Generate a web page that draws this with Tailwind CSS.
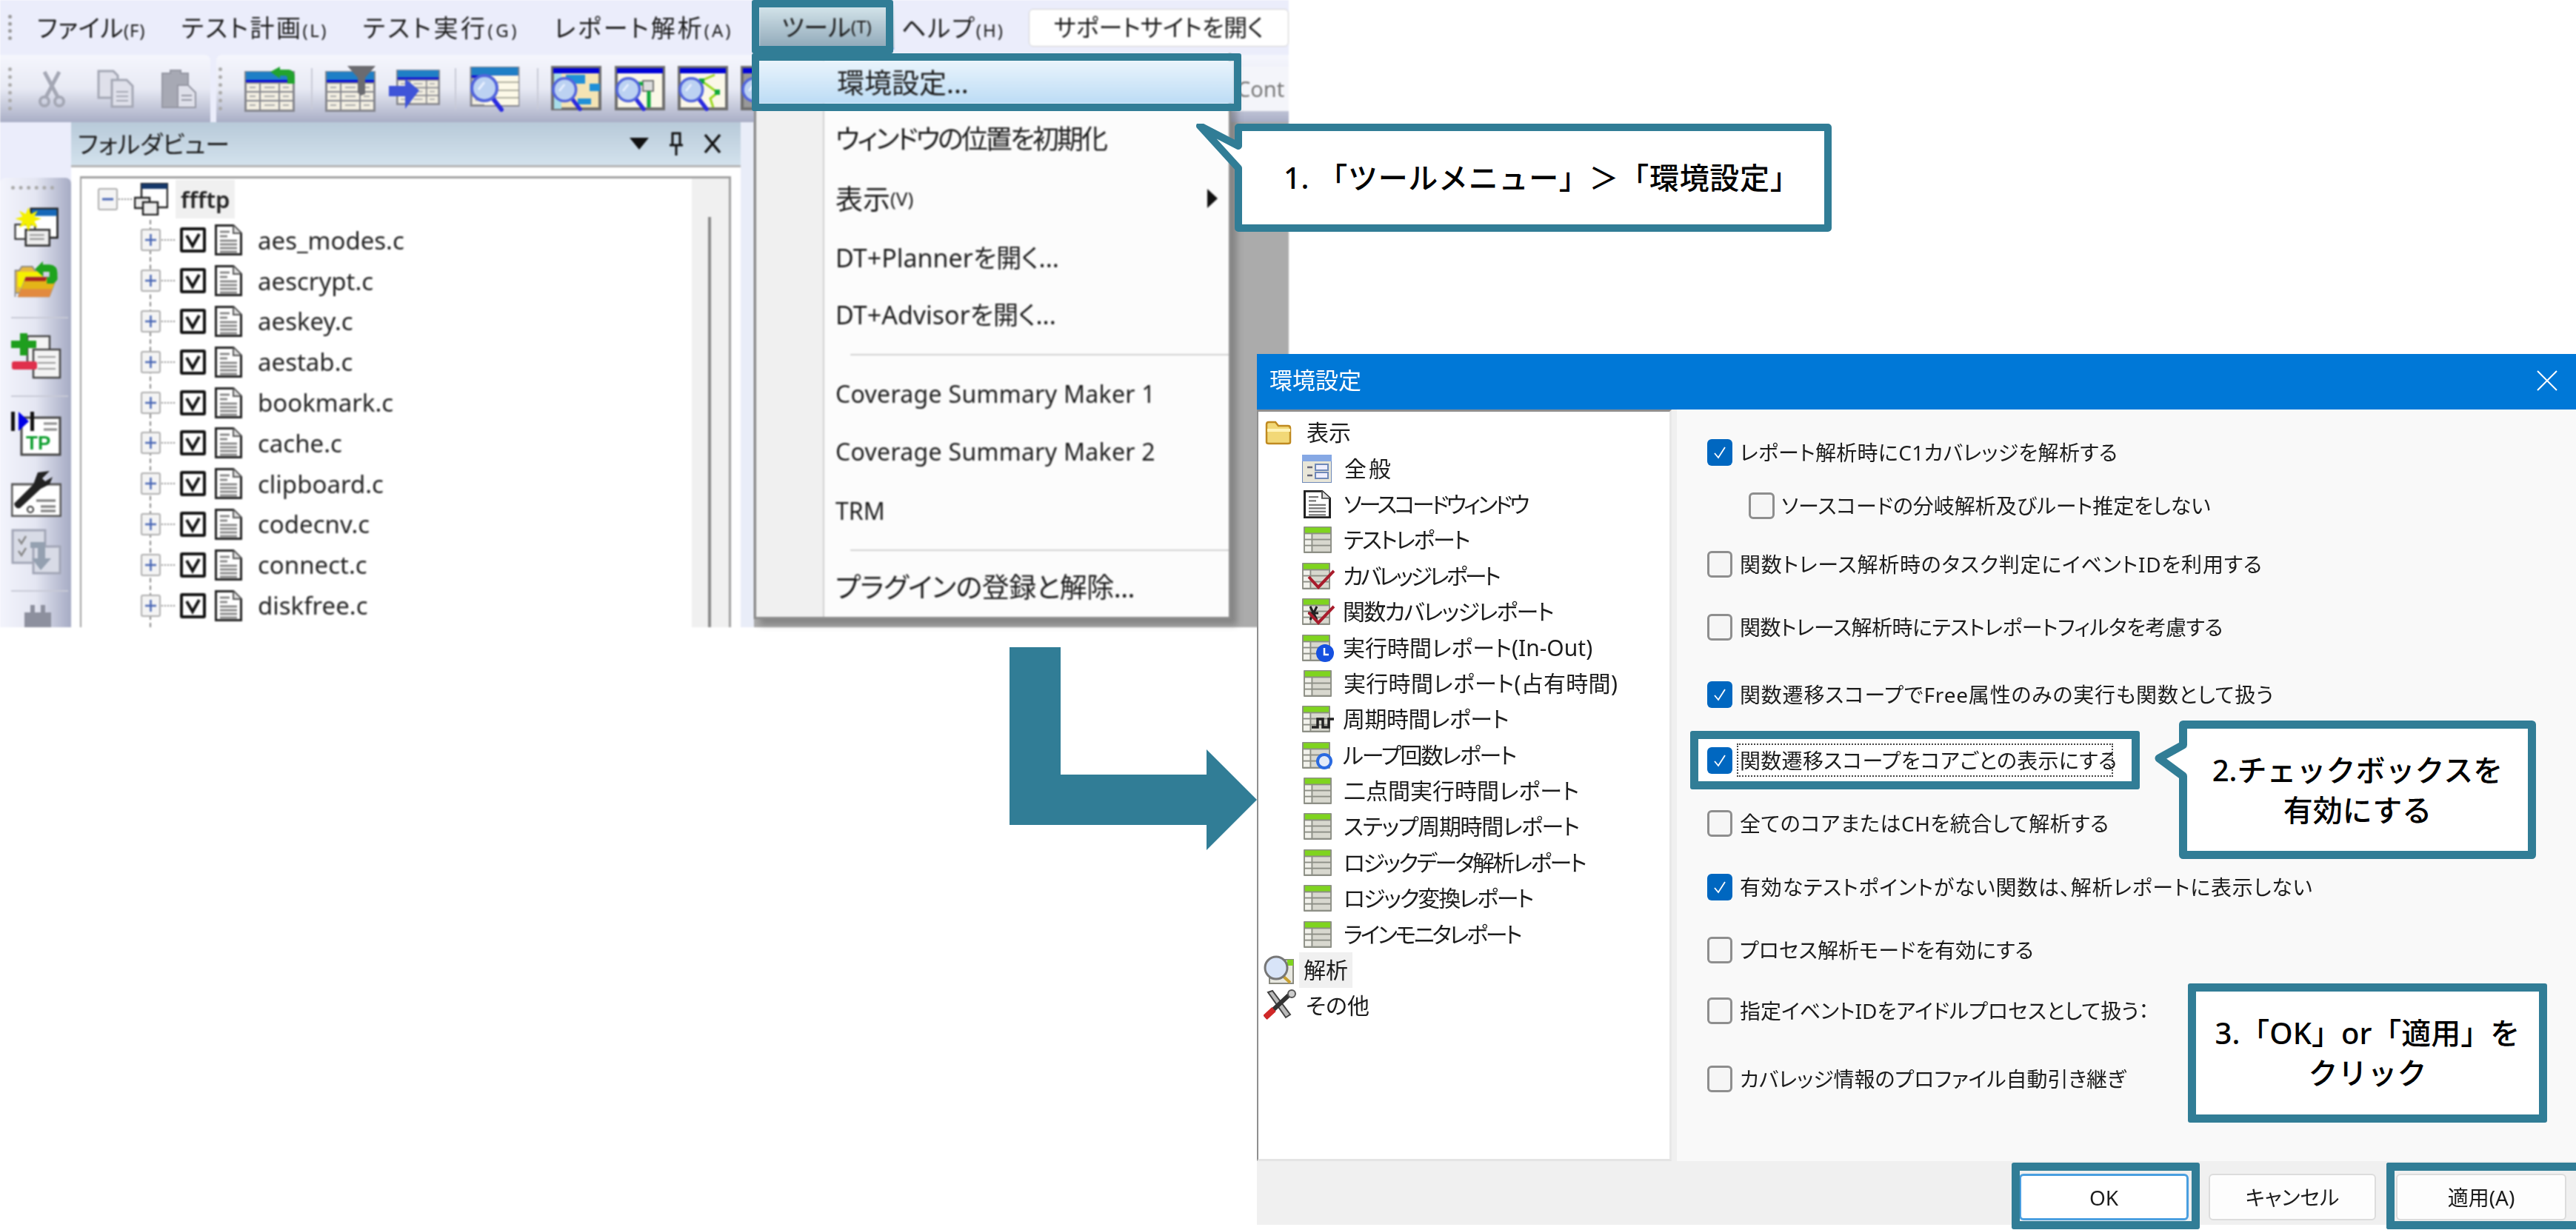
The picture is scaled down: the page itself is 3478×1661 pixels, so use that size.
<!DOCTYPE html>
<html lang="ja">
<head>
  <meta charset="UTF-8" />
  <title>環境設定の手順</title>
  <script src="https://cdn.jsdelivr.net/npm/@tailwindcss/browser@4"></script>
</head>
<body class="bg-white">
  <!-- 共通アイコン -->
  <svg class="absolute w-0 h-0">
    <defs>
      <symbol id="tbl" viewBox="0 0 40 38">
        <rect width="40" height="38" rx="1" fill="#8d8f86"/>
        <rect x="2" y="1.5" width="36" height="7.5" fill="#7fd41f"/>
        <rect x="2" y="11" width="9" height="6.5" fill="#f2f2ec"/><rect x="13" y="11" width="25" height="6.5" fill="#d8d8cf"/>
        <rect x="2" y="19.5" width="9" height="6.5" fill="#f2f2ec"/><rect x="13" y="19.5" width="25" height="6.5" fill="#d8d8cf"/>
        <rect x="2" y="28" width="9" height="7.5" fill="#f2f2ec"/><rect x="13" y="28" width="25" height="7.5" fill="#d8d8cf"/>
      </symbol>
      <symbol id="doc" viewBox="0 0 37 42">
        <path d="M1.5 1.5H25L35.5 12V40.5H1.5Z" fill="#fff" stroke="#222" stroke-width="3"/>
        <path d="M25 1.5V12H35.5" fill="#ddd" stroke="#555" stroke-width="2"/>
        <path d="M7 10H20M7 16H17M7 22H30M7 27H30M7 32H30M7 37H30" stroke="#777" stroke-width="2.5"/>
      </symbol>
      <symbol id="btbl" viewBox="0 0 68 55">
        <rect width="68" height="55" fill="#84858c"/>
        <rect x="2" y="1" width="64" height="11" fill="#1f7fc6"/>
        <rect x="2" y="12" width="64" height="3" fill="#0808dc"/>
        <g fill="#f3efe2">
          <rect x="3" y="17" width="17" height="10"/><rect x="22" y="17" width="24" height="10"/><rect x="48" y="17" width="17" height="10"/>
          <rect x="3" y="29" width="17" height="10"/><rect x="22" y="29" width="24" height="10"/><rect x="48" y="29" width="17" height="10"/>
          <rect x="3" y="41" width="17" height="11"/><rect x="22" y="41" width="24" height="11"/><rect x="48" y="41" width="17" height="11"/>
        </g>
        <g stroke="#aaa" stroke-width="2"><path d="M7 22H15M27 22H41M52 22H60M7 34H15M27 34H41M52 34H60M7 46H15M27 46H41M52 46H60"/></g>
      </symbol>
      <symbol id="mag" viewBox="0 0 46 52">
        <path d="M30 32L43 49" stroke="#2a2ae0" stroke-width="6" stroke-linecap="round"/>
        <circle cx="20" cy="20" r="17" fill="#bcd2f2" stroke="#5164dc" stroke-width="4"/>
        <path d="M12 22L20 12" stroke="#e8f0ff" stroke-width="3"/>
      </symbol>
      <symbol id="plusbox" viewBox="0 0 27 30">
        <rect x="1" y="1" width="25" height="28" rx="2" fill="#f4f4f4" stroke="#aeaeae" stroke-width="2"/>
        <path d="M13.500 7V23M6 15H21" stroke="#4866b4" stroke-width="2.500"/>
      </symbol>
      <symbol id="chk" viewBox="0 0 35 34">
        <rect x="2" y="2" width="31" height="30" rx="1" fill="#fff" stroke="#111" stroke-width="4"/>
        <path d="M9 11L17 25L26 9" fill="none" stroke="#111" stroke-width="4"/>
      </symbol>
      <symbol id="wchk" viewBox="0 0 34 36">
        <rect width="34" height="36" rx="6" fill="#0067c0"/>
        <path d="M10 19L15 25L24 11" fill="none" stroke="#fff" stroke-width="1.800"/>
      </symbol>
    </defs>
  </svg>

  <div class="relative w-[3478px] h-[1661px] overflow-hidden bg-white text-[#1c1c1c] font-['Noto_Sans','Noto_Sans_CJK_JP',sans-serif] [font-feature-settings:'palt']">

    <!-- アプリのウィンドウ -->
    <div class="absolute left-0 top-0 w-[1740px] h-[847px] overflow-hidden flex flex-col bg-[#ababab] blur-[0.9px]">
      <!-- メニューバー -->
      <div class="h-[74px] shrink-0 flex items-center bg-[#ebedfb] text-[33px] leading-none whitespace-nowrap">
        <div class="ml-[11px] w-[6px] h-[34px] border-l-[5px] border-dotted border-[#999]"></div>
        <span class="ml-[33px] w-[148px] tracking-[0.7px]">ファイル<span class="text-[24px]">(F)</span></span>
        <span class="ml-[47px] w-[200px] tracking-[2.5px]">テスト計画<span class="text-[24px]">(L)</span></span>
        <span class="ml-[45px] w-[210px] tracking-[3.5px]">テスト実行<span class="text-[24px]">(G)</span></span>
        <span class="ml-[48px] w-[243px] tracking-[3px]">レポート解析<span class="text-[24px]">(A)</span></span>
        <span class="ml-[34px] w-[182px] -mr-[4px] h-[60px] flex items-center justify-center bg-linear-to-b from-[#d6e6ec] to-[#8fa8b8] border-b-2 border-[#3d8fe0]">ツール<span class="text-[24px]">(T)</span></span>
        <span class="ml-[14px] w-[140px] tracking-[2px]">ヘルプ<span class="text-[24px]">(H)</span></span>
        <span class="ml-[32px] w-[351px] h-[51px] flex items-center justify-center rounded-[6px] bg-white border border-[#d0d0d0] text-[32px]">サポートサイトを開く</span>
      </div>
      <!-- ツールバー -->
      <div class="h-[91px] shrink-0 flex bg-[#ebedfb]">
        <div class="w-[284px] flex items-center rounded-tr-[8px] bg-linear-to-b from-[#f5f6fd] via-[#e8eaf4] to-[#a9aec6]">
          <div class="ml-[11px] w-[6px] h-[58px] border-l-[5px] border-dotted border-[#aaa]"></div>
          <svg class="ml-[33px]" width="40" height="50" viewBox="0 0 40 50" fill="none" stroke="#a4a7b4"><circle cx="10" cy="42" r="6" stroke-width="4"/><circle cx="30" cy="42" r="6" stroke-width="4"/><path d="M12 36L30 2M28 36L10 2" stroke-width="5"/></svg>
          <svg class="ml-[41px]" width="50" height="52" viewBox="0 0 50 52" fill="#dfe0ea" stroke="#a4a7b4" stroke-width="3"><path d="M2 2H22L28 8V38H2Z"/><path d="M20 14H40L48 22V50H20Z"/><path d="M26 30H42M26 36H42M26 42H42" stroke-width="2"/></svg>
          <svg class="ml-[35px]" width="50" height="54" viewBox="0 0 50 54" fill="#a7a9b4" stroke="#9496a2" stroke-width="2"><path d="M3 6H14V2H28V6H38V52H3Z"/><path d="M24 22H38L48 32V52H24Z" fill="#dfe0ea"/><path d="M29 36H43M29 42H43" stroke-width="2"/></svg>
        </div>
        <div class="ml-[8px] flex-1 flex items-center rounded-tl-[8px] bg-linear-to-b from-[#f5f6fd] via-[#e8eaf4] to-[#a9aec6]">
          <div class="ml-[3px] w-[6px] h-[58px] border-l-[5px] border-dotted border-[#aaa]"></div>
          <svg class="ml-[29px]" width="70" height="62" viewBox="0 0 70 62"><use href="#btbl" x="0" y="7" width="68" height="55"/><path d="M35 8L48 1V5H60Q68 6 68 16V24H58V16Q58 13 54 13H48V17Z" fill="#22a32e"/></svg>
          <div class="ml-[20px] w-[2px] h-[56px] bg-[#c8cad6]"></div>
          <svg class="ml-[17px]" width="70" height="62" viewBox="0 0 70 62"><use href="#btbl" x="0" y="7" width="68" height="55"/><path d="M30 0H68L54 16V38L48 40L44 36V16Z" fill="#6b6b70"/></svg>
          <svg class="ml-[16px]" width="70" height="60" viewBox="0 0 70 60"><use href="#btbl" x="10" y="1" width="59" height="54"/><path d="M0 26H22V16L41 32L22 57V40H0Z" fill="#3f54d8"/></svg>
          <div class="ml-[19px] w-[2px] h-[56px] bg-[#c8cad6]"></div>
          <svg class="ml-[18px]" width="70" height="62" viewBox="0 0 70 62"><use href="#btbl" x="0" y="1" width="68" height="54"/><rect x="20" y="13" width="46" height="40" fill="#fdf9e8"/><path d="M20 22H66M20 33H66M20 43H66" stroke="#b0b0a0" stroke-width="2"/><use href="#mag" x="0" y="10" width="46" height="52"/></svg>
          <div class="ml-[21px] w-[2px] h-[56px] bg-[#c8cad6]"></div>
          <svg class="ml-[17px]" width="70" height="62" viewBox="0 0 70 62"><rect x="2" y="2" width="64" height="56" fill="#f4e4b4" stroke="#6f6f6f" stroke-width="4"/><rect x="3" y="3" width="62" height="7" fill="#0000d8"/><rect x="4" y="10" width="10" height="48" fill="#a7dde8"/><rect x="20" y="12" width="26" height="12" fill="#1f8fd8"/><rect x="52" y="24" width="14" height="10" fill="#1f8fd8"/><rect x="36" y="44" width="18" height="8" fill="#1f8fd8"/><use href="#mag" x="0" y="14" width="42" height="47"/></svg>
          <svg class="ml-[16px]" width="70" height="62" viewBox="0 0 70 62"><rect x="2" y="2" width="64" height="56" fill="#fbf7e8" stroke="#6f6f6f" stroke-width="4"/><rect x="3" y="3" width="62" height="7" fill="#0000d8"/><rect x="38" y="20" width="14" height="14" fill="#ddd" stroke="#777" stroke-width="2"/><path d="M28 24H38M46 34V56" stroke="#10a83a" stroke-width="5"/><use href="#mag" x="0" y="14" width="42" height="47"/></svg>
          <svg class="ml-[15px]" width="70" height="62" viewBox="0 0 70 62"><rect x="2" y="2" width="64" height="56" fill="#fbf7e8" stroke="#6f6f6f" stroke-width="4"/><rect x="3" y="3" width="62" height="7" fill="#0000d8"/><path d="M50 12L32 20L54 36L44 44L48 56" fill="none" stroke="#9ad81c" stroke-width="3"/><rect x="29" y="17" width="7" height="7" fill="#10a83a"/><rect x="50" y="32" width="7" height="7" fill="#10a83a"/><use href="#mag" x="0" y="14" width="42" height="47"/></svg>
          <svg class="ml-[15px]" width="20" height="62" viewBox="0 0 20 62"><rect x="2" y="2" width="30" height="56" fill="#999" stroke="#6f6f6f" stroke-width="4"/><rect x="3" y="3" width="30" height="7" fill="#0000d8"/><use href="#mag" x="0" y="14" width="42" height="47"/></svg>
          <div class="ml-auto h-[60px] w-[78px] pl-[8px] flex items-center overflow-hidden bg-[#f4f5fa] text-[29px] text-[#777] leading-none">Cont</div>
        </div>
      </div>
      <!-- 本体 -->
      <div class="flex-1 min-h-0 flex">
        <div class="w-[96px] shrink-0 flex flex-col bg-[#ebedfb]">
          <div class="h-[75px] shrink-0"></div>
          <div class="flex-1 min-h-0 flex flex-col overflow-hidden pl-[15px] rounded-t-[8px] bg-linear-to-r from-[#f3f4fc] via-[#e4e6f2] to-[#a6abc4]">
            <div class="mt-[11px] w-[58px] h-[6px] border-t-[5px] border-dotted border-[#aaa]"></div>
            <svg class="mt-[23px]" width="68" height="60" viewBox="0 0 68 60"><rect x="26" y="2" width="40" height="44" fill="#fff" stroke="#222" stroke-width="3"/><rect x="27" y="3" width="38" height="10" fill="#1668b8"/><rect x="2" y="26" width="30" height="22" fill="#fff" stroke="#333" stroke-width="2.500"/><rect x="18" y="34" width="36" height="24" fill="#eee" stroke="#333" stroke-width="3"/><path d="M24 42H46M24 48H46" stroke="#888" stroke-width="2"/><path d="M22 0L26 10L36 5L31 14L42 17L31 21L36 31L26 26L22 36L18 26L8 31L13 21L2 17L13 14L8 5L18 10Z" fill="#f5f000"/></svg>
            <svg class="mt-[18px]" width="68" height="58" viewBox="0 0 68 58"><path d="M2 56V16H8L12 10H28L32 16H44V50H2Z" fill="#e6b840" stroke="#888" stroke-width="2"/><path d="M6 18H44V56L6 40Z" fill="#f5f000"/><path d="M6 56L18 26H66L54 56Z" fill="#e4b418" stroke="#999"/><path d="M18 26H50L48 32H16Z" fill="#a82020"/><path d="M6 56L11 44H58L54 56Z" fill="#e28a40"/><path d="M32 14L44 2V7H54Q66 8 66 20V30L60 36H50V26H54V18H44V25Z" fill="#1ea31e"/></svg>
            <div class="mt-[25px] w-[77px] h-[2px] shrink-0 bg-[#c8cad6]"></div>
            <svg class="mt-[20px] shrink-0" width="68" height="62" viewBox="0 0 68 62"><rect x="22" y="4" width="30" height="42" fill="#f4f4f4" stroke="#444" stroke-width="2.500"/><rect x="30" y="22" width="36" height="38" fill="#f4f4f4" stroke="#444" stroke-width="2.500"/><path d="M36 32H60M36 40H60M36 48H60" stroke="#999" stroke-width="2"/><path d="M12 0H22V10H34V20H22V30H12V20H0V10H12Z" fill="#1e9e1e"/><rect x="1" y="38" width="34" height="11" rx="3" fill="#e0304c"/></svg>
            <div class="mt-[22px] w-[77px] h-[2px] shrink-0 bg-[#c8cad6]"></div>
            <svg class="mt-[18px] shrink-0" width="68" height="62" viewBox="0 0 68 62"><rect x="14" y="10" width="52" height="50" fill="#fff" stroke="#444" stroke-width="3"/><path d="M44 18H62M44 26H62" stroke="#888" stroke-width="3"/><rect x="0" y="2" width="5" height="26" fill="#111"/><rect x="26" y="2" width="5" height="26" fill="#111"/><path d="M10 2L24 15L10 28Z" fill="#0000e6"/><text x="20" y="53" font-size="26" font-weight="700" fill="#10a030" font-family="Liberation Sans">TP</text></svg>
            <svg class="mt-[20px] shrink-0" width="68" height="62" viewBox="0 0 68 62"><rect x="1" y="18" width="66" height="43" fill="#fff" stroke="#555" stroke-width="3"/><path d="M34 40H60M40 48H60M40 54H60" stroke="#777" stroke-width="3"/><circle cx="26" cy="52" r="4" fill="none" stroke="#333" stroke-width="2"/><path d="M4 44L30 18L36 2L52 0L42 10L46 14L56 8L52 18L40 24L12 50Q6 52 4 44Z" fill="#222"/></svg>
            <svg class="mt-[16px] shrink-0" width="68" height="62" viewBox="0 0 68 62" fill="#d8dbe6" stroke="#a2a6b6" stroke-width="3"><rect x="2" y="2" width="44" height="44"/><rect x="30" y="24" width="36" height="36"/><path d="M10 14L14 20L20 10M10 30L14 36L20 26" fill="none" stroke="#888" stroke-width="2.500"/><path d="M26 18H46V40H54L40 56L28 40H36V26H26Z" fill="#94a0b0" stroke="none"/></svg>
            <div class="mt-[21px] w-[77px] h-[2px] shrink-0 bg-[#c8cad6]"></div>
            <svg class="mt-[18px] ml-[18px] shrink-0" width="36" height="30" viewBox="0 0 36 30" fill="#8d909e"><rect x="8" width="6" height="12"/><rect x="22" width="6" height="12"/><rect y="10" width="36" height="20"/></svg>
          </div>
        </div>

        <!-- フォルダビュー -->
        <div class="w-[904px] shrink-0 flex flex-col">
          <div class="h-[58px] shrink-0 flex items-center pl-[9px] bg-linear-to-b from-[#b8cad9] to-[#d3e2ed] text-[33px] leading-none">
            <span>フォルダビュー</span>
            <svg class="ml-[540px]" width="26" height="16" viewBox="0 0 26 16"><path d="M0 0H26L13 16Z" fill="#111"/></svg>
            <svg class="ml-[28px]" width="18" height="32" viewBox="0 0 18 32" fill="none" stroke="#111" stroke-width="3"><path d="M4 2H14V18H4ZM0 18H18M9 18V32"/></svg>
            <svg class="ml-[28px]" width="24" height="28" viewBox="0 0 24 28" stroke="#111" stroke-width="3.500"><path d="M2 2L22 26M22 2L2 26"/></svg>
          </div>
          <div class="flex-1 min-h-0 flex flex-col bg-white border-t-[3px] border-[#b4b4b4] pl-[12px] pr-[13px] pt-[12px]">
            <div class="relative flex-1 min-h-0 flex overflow-hidden border-l-2 border-t-[3px] border-r-[3px] border-[#a0a0a0]">
              <div class="relative flex-1 bg-white text-[33px] leading-none text-[#222]">
                <div class="absolute left-[92px] top-[56px] bottom-0 border-l-2 border-dashed border-[#888]"></div>
                <div class="relative h-[56px] flex items-center pl-[22px]">
                  <svg width="27" height="30" viewBox="0 0 27 30"><rect x="1" y="1" width="25" height="28" rx="2" fill="#f4f4f4" stroke="#aeaeae" stroke-width="2"/><path d="M6 15H21" stroke="#4866b4" stroke-width="3"/></svg>
                  <div class="w-[18px] mx-[1px] border-t-2 border-dotted border-[#888]"></div>
                  <svg class="ml-[2px]" width="46" height="44" viewBox="0 0 46 44"><rect x="10" y="1" width="35" height="32" fill="#fff" stroke="#222" stroke-width="2.500"/><rect x="10" y="1" width="35" height="7" fill="#16386a"/><rect x="1" y="20" width="20" height="14" fill="#eee" stroke="#222" stroke-width="2.500"/><rect x="12" y="26" width="20" height="17" fill="#eee" stroke="#222" stroke-width="2.500"/></svg>
                  <span class="ml-[10px] px-[7px] h-[52px] flex items-center bg-[#f0f0f0] font-semibold text-[31px]">ffftp</span>
                </div>
                <div class="relative h-[54.8px] flex items-center pl-[80px]"><svg width="27" height="30"><use href="#plusbox"/></svg><div class="w-[18px] mx-[1px] border-t-2 border-dotted border-[#888]"></div><svg class="ml-[6px]" width="35" height="34"><use href="#chk"/></svg><svg class="ml-[12px]" width="37" height="42"><use href="#doc"/></svg><span class="ml-[21px]">aes_modes.c</span></div>
                <div class="relative h-[54.8px] flex items-center pl-[80px]"><svg width="27" height="30"><use href="#plusbox"/></svg><div class="w-[18px] mx-[1px] border-t-2 border-dotted border-[#888]"></div><svg class="ml-[6px]" width="35" height="34"><use href="#chk"/></svg><svg class="ml-[12px]" width="37" height="42"><use href="#doc"/></svg><span class="ml-[21px]">aescrypt.c</span></div>
                <div class="relative h-[54.8px] flex items-center pl-[80px]"><svg width="27" height="30"><use href="#plusbox"/></svg><div class="w-[18px] mx-[1px] border-t-2 border-dotted border-[#888]"></div><svg class="ml-[6px]" width="35" height="34"><use href="#chk"/></svg><svg class="ml-[12px]" width="37" height="42"><use href="#doc"/></svg><span class="ml-[21px]">aeskey.c</span></div>
                <div class="relative h-[54.8px] flex items-center pl-[80px]"><svg width="27" height="30"><use href="#plusbox"/></svg><div class="w-[18px] mx-[1px] border-t-2 border-dotted border-[#888]"></div><svg class="ml-[6px]" width="35" height="34"><use href="#chk"/></svg><svg class="ml-[12px]" width="37" height="42"><use href="#doc"/></svg><span class="ml-[21px]">aestab.c</span></div>
                <div class="relative h-[54.8px] flex items-center pl-[80px]"><svg width="27" height="30"><use href="#plusbox"/></svg><div class="w-[18px] mx-[1px] border-t-2 border-dotted border-[#888]"></div><svg class="ml-[6px]" width="35" height="34"><use href="#chk"/></svg><svg class="ml-[12px]" width="37" height="42"><use href="#doc"/></svg><span class="ml-[21px]">bookmark.c</span></div>
                <div class="relative h-[54.8px] flex items-center pl-[80px]"><svg width="27" height="30"><use href="#plusbox"/></svg><div class="w-[18px] mx-[1px] border-t-2 border-dotted border-[#888]"></div><svg class="ml-[6px]" width="35" height="34"><use href="#chk"/></svg><svg class="ml-[12px]" width="37" height="42"><use href="#doc"/></svg><span class="ml-[21px]">cache.c</span></div>
                <div class="relative h-[54.8px] flex items-center pl-[80px]"><svg width="27" height="30"><use href="#plusbox"/></svg><div class="w-[18px] mx-[1px] border-t-2 border-dotted border-[#888]"></div><svg class="ml-[6px]" width="35" height="34"><use href="#chk"/></svg><svg class="ml-[12px]" width="37" height="42"><use href="#doc"/></svg><span class="ml-[21px]">clipboard.c</span></div>
                <div class="relative h-[54.8px] flex items-center pl-[80px]"><svg width="27" height="30"><use href="#plusbox"/></svg><div class="w-[18px] mx-[1px] border-t-2 border-dotted border-[#888]"></div><svg class="ml-[6px]" width="35" height="34"><use href="#chk"/></svg><svg class="ml-[12px]" width="37" height="42"><use href="#doc"/></svg><span class="ml-[21px]">codecnv.c</span></div>
                <div class="relative h-[54.8px] flex items-center pl-[80px]"><svg width="27" height="30"><use href="#plusbox"/></svg><div class="w-[18px] mx-[1px] border-t-2 border-dotted border-[#888]"></div><svg class="ml-[6px]" width="35" height="34"><use href="#chk"/></svg><svg class="ml-[12px]" width="37" height="42"><use href="#doc"/></svg><span class="ml-[21px]">connect.c</span></div>
                <div class="relative h-[54.8px] flex items-center pl-[80px]"><svg width="27" height="30"><use href="#plusbox"/></svg><div class="w-[18px] mx-[1px] border-t-2 border-dotted border-[#888]"></div><svg class="ml-[6px]" width="35" height="34"><use href="#chk"/></svg><svg class="ml-[12px]" width="37" height="42"><use href="#doc"/></svg><span class="ml-[21px]">diskfree.c</span></div>
              </div>
              <div class="relative w-[50px] shrink-0 bg-[#f0f0f0]">
                <div class="absolute left-[22px] top-[52px] bottom-0 w-[4px] bg-[#8a8a8a]"></div>
              </div>
            </div>
          </div>
        </div>
        <div class="w-[18px] shrink-0 bg-[#e9edf8]"></div>
      </div>
    </div>

    <!-- ツールメニュー -->
    <div class="absolute left-[1018px] top-[72px] w-[644px] h-[764px] flex overflow-hidden bg-[#fcfcfc] border-l-[3px] border-r-[3px] border-b-[3px] border-[#8c8c8c] shadow-[8px_8px_8px_rgba(60,60,60,0.35)] blur-[0.9px] text-[34px] leading-none whitespace-nowrap">
      <div class="w-[92px] shrink-0 bg-[#f0f0f0] border-r-2 border-[#d2d2d2]"></div>
      <div class="flex-1 flex flex-col pl-[15px]">
        <div class="h-[78px] shrink-0"></div>
        <div class="h-[76px] shrink-0 flex items-center text-[36px] tracking-[-3px]">ウィンドウの位置を初期化</div>
        <div class="h-[84px] shrink-0 flex items-center text-[37px]">表示<span class="text-[26px]">(V)</span><svg class="ml-[397px]" width="14" height="26" viewBox="0 0 14 26"><path d="M0 0L14 13L0 26Z" fill="#111"/></svg></div>
        <div class="h-[76px] shrink-0 flex items-center">DT+Plannerを開く...</div>
        <div class="h-[78px] shrink-0 flex items-center">DT+Advisorを開く...</div>
        <div class="h-[30px] shrink-0 flex items-center pl-[20px]"><div class="w-full h-[2px] bg-[#d2d2d2]"></div></div>
        <div class="h-[76px] shrink-0 flex items-center text-[32px] tracking-[0.3px]">Coverage Summary Maker 1</div>
        <div class="h-[80px] shrink-0 flex items-center text-[32px] tracking-[0.3px]">Coverage Summary Maker 2</div>
        <div class="h-[80px] shrink-0 flex items-center text-[32px]">TRM</div>
        <div class="h-[26px] shrink-0 flex items-center pl-[20px]"><div class="w-full h-[2px] bg-[#d2d2d2]"></div></div>
        <div class="h-[72px] shrink-0 flex items-center text-[37px] tracking-[-0.5px]">プラグインの登録と解除...</div>
      </div>
    </div>
    <div class="absolute left-[1024px] top-[82px] w-[642px] h-[58px] flex items-center pl-[106px] bg-linear-to-b from-[#eaf4fc] to-[#bcdcf5] blur-[0.9px] text-[37px] leading-none">環境設定...</div>

    <!-- 環境設定ダイアログ -->
    <div class="absolute left-[1697px] top-[478px] w-[1781px] h-[1176px] flex flex-col bg-[#f0f0f0] blur-[0.7px] text-[28px] leading-none whitespace-nowrap">
      <div class="h-[75px] shrink-0 flex items-center justify-between pl-[17px] pr-[24px] pb-[4px] bg-[#0078d7] text-white text-[31px]">
        <span>環境設定</span>
        <svg width="30" height="30" viewBox="0 0 30 30" stroke="#fff" stroke-width="2"><path d="M2 2L28 28M28 2L2 28"/></svg>
      </div>
      <div class="h-[1015px] shrink-0 flex">
        <!-- ツリー -->
        <div class="w-[560px] shrink-0 pt-[4px] bg-white border-l-2 border-t-[3px] border-[#8f8f8f] border-b-[3px] border-b-[#e4e4e4] border-r-[3px] border-r-[#e8e8e8] text-[30px]">
          <div class="h-[48.4px] flex items-center pl-[9px]"><svg width="38" height="34" viewBox="0 0 38 34"><path d="M2 30V6Q2 3 5 3H14L18 8H31Q34 8 34 11V30Q34 32 31 32H5Q2 32 2 30Z" fill="#f2d877" stroke="#c08a20" stroke-width="2.500"/><path d="M3 14H34" stroke="#fff3b8" stroke-width="4"/></svg><span class="ml-[18px]">表示</span></div>
          <div class="h-[48.4px] flex items-center pl-[59px]"><svg width="40" height="38" viewBox="0 0 40 38"><rect width="40" height="38" fill="#e8e6d8" stroke="#6f89b8" stroke-width="2"/><rect width="40" height="9" fill="#86a8e4"/><path d="M7 17H14M7 28H14" stroke="#667" stroke-width="2.500"/><rect x="18" y="13" width="17" height="8" fill="#eef" stroke="#6f89b8" stroke-width="2"/><rect x="18" y="24" width="17" height="8" fill="#eef" stroke="#6f89b8" stroke-width="2"/></svg><span class="ml-[17px] tracking-[3px]">全般</span></div>
          <div class="h-[48.4px] flex items-center pl-[61px]"><svg width="37" height="38" viewBox="0 0 37 42" preserveAspectRatio="none"><use href="#doc" width="37" height="42"/></svg><span class="ml-[17px] tracking-[-3.8px]">ソースコードウィンドウ</span></div>
          <div class="h-[48.4px] flex items-center pl-[61px]"><svg width="38" height="38"><use href="#tbl"/></svg><span class="ml-[16px] tracking-[-2.3px]">テストレポート</span></div>
          <div class="h-[48.4px] flex items-center pl-[59px]"><svg width="44" height="38" viewBox="0 0 44 38"><use href="#tbl" width="38" height="38"/><path d="M9 20L22 34L43 12" fill="none" stroke="#a81c2c" stroke-width="4"/></svg><span class="ml-[11px] tracking-[-3.7px]">カバレッジレポート</span></div>
          <div class="h-[48.4px] flex items-center pl-[59px]"><svg width="44" height="38" viewBox="0 0 44 38"><use href="#tbl" width="38" height="38"/><path d="M11 12L20 30M20 12L11 30M8 21H22" stroke="#222" stroke-width="3"/><path d="M9 20L22 34L43 12" fill="none" stroke="#a81c2c" stroke-width="4"/></svg><span class="ml-[11px] tracking-[-1.8px]">関数カバレッジレポート</span></div>
          <div class="h-[48.4px] flex items-center pl-[59px]"><svg width="44" height="38" viewBox="0 0 44 38"><use href="#tbl" width="38" height="38"/><circle cx="31" cy="26" r="12" fill="#1550e0"/><path d="M30 19V28H36" fill="none" stroke="#fff" stroke-width="2.500"/></svg><span class="ml-[11px]">実行時間レポート(In-Out)</span></div>
          <div class="h-[48.4px] flex items-center pl-[61px]"><svg width="38" height="38"><use href="#tbl"/></svg><span class="ml-[16px] tracking-[0.3px]">実行時間レポート(占有時間)</span></div>
          <div class="h-[48.4px] flex items-center pl-[59px]"><svg width="44" height="38" viewBox="0 0 44 38"><use href="#tbl" width="38" height="38"/><path d="M13 30H21V19H28V30H36V19H43" fill="none" stroke="#222" stroke-width="3.500"/></svg><span class="ml-[11px] tracking-[-0.5px]">周期時間レポート</span></div>
          <div class="h-[48.4px] flex items-center pl-[59px]"><svg width="44" height="38" viewBox="0 0 44 38"><use href="#tbl" width="38" height="38"/><circle cx="30" cy="27" r="9" fill="#e4ecf8" stroke="#2a6ae0" stroke-width="4"/></svg><span class="ml-[11px] tracking-[-2px]">ループ回数レポート</span></div>
          <div class="h-[48.4px] flex items-center pl-[61px]"><svg width="38" height="38"><use href="#tbl"/></svg><span class="ml-[16px]">二点間実行時間レポート</span></div>
          <div class="h-[48.4px] flex items-center pl-[61px]"><svg width="38" height="38"><use href="#tbl"/></svg><span class="ml-[16px] tracking-[-1.3px]">ステップ周期時間レポート</span></div>
          <div class="h-[48.4px] flex items-center pl-[61px]"><svg width="38" height="38"><use href="#tbl"/></svg><span class="ml-[16px] tracking-[-2.7px]">ロジックデータ解析レポート</span></div>
          <div class="h-[48.4px] flex items-center pl-[61px]"><svg width="38" height="38"><use href="#tbl"/></svg><span class="ml-[16px] tracking-[-2.2px]">ロジック変換レポート</span></div>
          <div class="h-[48.4px] flex items-center pl-[61px]"><svg width="38" height="38"><use href="#tbl"/></svg><span class="ml-[16px] tracking-[-3.1px]">ラインモニタレポート</span></div>
          <div class="h-[48.4px] flex items-center pl-[7px]"><svg width="41" height="40" viewBox="0 0 41 40"><rect x="8" y="6" width="32" height="32" fill="#e8e8e0" stroke="#8a8a80" stroke-width="2"/><rect x="32" y="6" width="8" height="8" fill="#7fd41f"/><path d="M24 26L36 37" stroke="#c8a030" stroke-width="4"/><circle cx="17" cy="17" r="15" fill="#d8e4f8" stroke="#777" stroke-width="3"/></svg><span class="ml-[7px] px-[6px] h-[48px] flex items-center bg-[#f0f0f0]">解析</span></div>
          <div class="h-[48.4px] flex items-center pl-[7px]"><svg width="46" height="44" viewBox="0 0 46 44"><path d="M6 4L12 2L36 34L30 38Z" fill="#bbb" stroke="#444" stroke-width="2"/><path d="M2 38L34 8" stroke="#333" stroke-width="6"/><path d="M2 38L14 27" stroke="#d02828" stroke-width="8"/><circle cx="38" cy="6" r="5" fill="#ccc" stroke="#555" stroke-width="2"/></svg><span class="ml-[11px]">その他</span></div>
        </div>
        <!-- オプション -->
        <div class="ml-[7px] flex-1 pt-[22px] bg-[#f9f9f9]">
          <div class="h-[72px] flex items-center pl-[41px]"><svg width="34" height="36"><use href="#wchk"/></svg><span class="ml-[10px] tracking-[0.3px]">レポート解析時にC1カバレッジを解析する</span></div>
          <div class="h-[72px] flex items-center pl-[97px]"><div class="w-[35px] h-[36px] rounded-[6px] border-[3px] border-[#8e8e8e] bg-[#f6f6f6]"></div><span class="ml-[9px]">ソースコードの分岐解析及びルート推定をしない</span></div>
          <div class="h-[86px] flex items-center pl-[41px]"><div class="w-[34px] h-[36px] rounded-[6px] border-[3px] border-[#8e8e8e] bg-[#f6f6f6]"></div><span class="ml-[10px] tracking-[0.8px]">関数トレース解析時のタスク判定にイベントIDを利用する</span></div>
          <div class="h-[84px] flex items-center pl-[41px]"><div class="w-[34px] h-[36px] rounded-[6px] border-[3px] border-[#8e8e8e] bg-[#f6f6f6]"></div><span class="ml-[10px] tracking-[-0.5px]">関数トレース解析時にテストレポートフィルタを考慮する</span></div>
          <div class="h-[98px] flex items-center pl-[41px]"><svg width="34" height="36"><use href="#wchk"/></svg><span class="ml-[10px] tracking-[0.8px]">関数遷移スコープでFree属性のみの実行も関数として扱う</span></div>
          <div class="ml-[18px] w-[607px] h-[79px] flex items-center pl-[23px] bg-white"><svg width="34" height="36"><use href="#wchk"/></svg><span class="ml-[6px] h-[45px] w-[508px] flex items-center pl-[2px] border-2 border-dotted border-[#444] tracking-[0.3px]">関数遷移スコープをコアごとの表示にする</span></div>
          <div class="h-[92px] flex items-center pl-[41px]"><div class="w-[34px] h-[36px] rounded-[6px] border-[3px] border-[#8e8e8e] bg-[#f6f6f6]"></div><span class="ml-[10px] tracking-[0.5px]">全てのコアまたはCHを統合して解析する</span></div>
          <div class="h-[80px] flex items-center pl-[41px]"><svg width="34" height="36"><use href="#wchk"/></svg><span class="ml-[10px] tracking-[0.8px]">有効なテストポイントがない関数は、解析レポートに表示しない</span></div>
          <div class="h-[90px] flex items-center pl-[41px]"><div class="w-[34px] h-[36px] rounded-[6px] border-[3px] border-[#8e8e8e] bg-[#f6f6f6]"></div><span class="ml-[10px]">プロセス解析モードを有効にする</span></div>
          <div class="h-[74px] flex items-center pl-[41px]"><div class="w-[34px] h-[36px] rounded-[6px] border-[3px] border-[#8e8e8e] bg-[#f6f6f6]"></div><span class="ml-[10px]">指定イベントIDをアイドルプロセスとして扱う：</span></div>
          <div class="h-[110px] flex items-center pl-[41px]"><div class="w-[34px] h-[36px] rounded-[6px] border-[3px] border-[#8e8e8e] bg-[#f6f6f6]"></div><span class="ml-[10px]">カバレッジ情報のプロファイル自動引き継ぎ</span></div>
        </div>
      </div>
      <!-- ボタン -->
      <div class="flex-1 flex justify-end gap-[27px] pr-[13px] pt-[17px]">
        <div class="w-[229px] h-[63px] flex items-center justify-center rounded-[6px] bg-white border-[3px] border-[#4a9fe0]">OK</div>
        <div class="w-[226px] h-[63px] flex items-center justify-center rounded-[6px] bg-[#fdfdfd] border-2 border-[#dcdcdc]">キャンセル</div>
        <div class="w-[230px] h-[63px] flex items-center justify-center rounded-[6px] bg-[#fdfdfd] border-2 border-[#dcdcdc]">適用(A)</div>
      </div>
    </div>

    <!-- 注釈の枠 -->
    <div class="absolute left-[1015px] top-0 w-[191px] h-[72px] border-[10px] border-[#317d96] rounded-[3px]"></div>
    <div class="absolute left-[1015px] top-[72px] w-[661px] h-[78px] border-[10px] border-[#317d96] rounded-[3px]"></div>
    <div class="absolute left-[2282px] top-[987px] w-[607px] h-[79px] border-[11px] border-[#317d96] rounded-[3px]"></div>
    <div class="absolute left-[2716px] top-[1570px] w-[254px] h-[90px] border-[11px] border-[#317d96] rounded-[3px]"></div>
    <div class="absolute left-[3222px] top-[1570px] w-[256px] h-[90px] border-[11px] border-r-0 border-[#317d96] rounded-l-[3px]"></div>

    <!-- 矢印 -->
    <svg class="absolute left-[1363px] top-[874px]" width="334" height="274" viewBox="0 0 334 274"><path d="M0 0H69V172H266V138L334 206L266 274V240H0Z" fill="#317d96"/></svg>

    <!-- 吹き出し -->
    <div class="absolute left-[1615px] top-[167px] w-[858px] h-[146px] flex items-center pl-[118px] text-[40px] font-medium text-black leading-none [font-feature-settings:normal] whitespace-nowrap">
      <svg class="absolute inset-0" width="858" height="146" viewBox="0 0 858 146"><path d="M57 5H853V141H57V60L5 3L57 30Z" fill="#fff" stroke="#317d96" stroke-width="10" stroke-linejoin="round"/></svg>
      <span class="relative tracking-[0.7px]">1. 「ツールメニュー」＞「環境設定」</span>
    </div>
    <div class="absolute left-[2909px] top-[973px] w-[515px] h-[187px] flex flex-col items-center justify-center pl-[33px] text-[40px] font-medium text-black leading-[54px] [font-feature-settings:normal] whitespace-nowrap">
      <svg class="absolute inset-0" width="515" height="187" viewBox="0 0 515 187"><path d="M38.500 5.500H509.500V181.500H38.500V75L6 51L38.500 33Z" fill="#fff" stroke="#317d96" stroke-width="11" stroke-linejoin="round"/></svg>
      <span class="relative">2.チェックボックスを</span>
      <span class="relative">有効にする</span>
    </div>
    <div class="absolute left-[2954px] top-[1328px] w-[485px] h-[188px] flex flex-col items-center justify-center bg-white border-[11px] border-[#317d96] rounded-[3px] text-[40px] font-medium text-black leading-[54px] [font-feature-settings:normal] whitespace-nowrap">
      <span>3.「OK」or「適用」を</span>
      <span>クリック</span>
    </div>
  </div>
</body>
</html>
